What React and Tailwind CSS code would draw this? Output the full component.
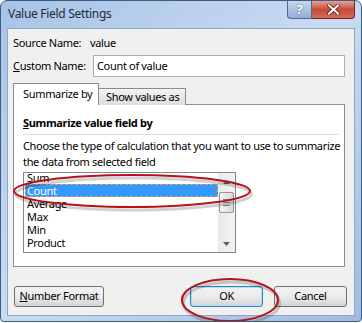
import React from "react";

const items = ["Sum", "Count", "Average", "Max", "Min", "Product"];

function Button({ children, focused, className = "" }) {
  return (
    <div
      className={`h-[21px] flex items-center justify-center rounded-[3px] border whitespace-nowrap ${
        focused ? "border-[#3c7fb1] shadow-[inset_0_0_0_1px_#a6e3fb]" : "border-[#707070]"
      } bg-gradient-to-b from-[#f2f2f2] via-[#ebebeb] to-[#d4d4d4] ${className}`}
    >
      {children}
    </div>
  );
}

export default function App() {
  return (
    <div
      className="w-[362px] h-[323px] bg-white text-[11px] tracking-[-0.33px] text-black whitespace-nowrap"
      style={{ fontFamily: '"Segoe UI", "Noto Sans", sans-serif' }}
    >
      <div className="relative w-[362px] h-[322px] rounded-t-[7px] rounded-b-[4px] border border-[#3d5c82] bg-gradient-to-br from-[#a9c3e5] via-[#c8dbf2] to-[#9fbbe2] flex flex-col overflow-hidden">
        {/* title bar */}
        <div className="h-[27px] flex items-start shrink-0">
          <div className="pl-[7px] pt-[5px] leading-[16px] text-[12px] tracking-[-0.3px] text-[#1b2a3d]">Value Field Settings</div>
          <div className="ml-auto flex mr-[6px]">
            <div className="w-[25px] h-[18px] rounded-bl-[4px] border border-t-0 border-[#4d6a91] bg-gradient-to-b from-[#c8d8ee] to-[#93aed3] flex items-center justify-center text-white font-bold text-[13px] leading-none [text-shadow:0_0_2px_#34506f]">
              ?
            </div>
            <div className="w-[43px] h-[18px] rounded-br-[4px] border border-t-0 border-l-0 border-[#6b2a24] bg-gradient-to-b from-[#e0a195] via-[#c94a37] to-[#d46b55] flex items-center justify-center">
              <svg width="13" height="11" viewBox="0 0 13 11">
                <path d="M2 1.5 L11 9.5 M11 1.5 L2 9.5" stroke="#5a1d17" strokeWidth="3.6" strokeLinecap="square" />
                <path d="M2 1.5 L11 9.5 M11 1.5 L2 9.5" stroke="#ffffff" strokeWidth="2" strokeLinecap="square" />
              </svg>
            </div>
          </div>
        </div>

        {/* client area */}
        <div className="mx-[6px] h-[288px] border border-[#8fa7c6] bg-[#f0f0f0] pl-[5px] pt-[4px]">
          <div className="h-[20px] flex items-center">
            <span className="w-[77px] shrink-0">Source Name:</span>
            <span>value</span>
          </div>
          <div className="mt-[2px] h-[22px] flex items-center">
            <span className="w-[80px] shrink-0">
              <span className="underline">C</span>ustom Name:
            </span>
            <div className="w-[252px] h-[22px] border border-[#abadb3] bg-white flex items-center pl-[3px]">
              Count of value
            </div>
          </div>

          {/* tabs */}
          <div className="mt-[6px] flex items-end h-[22px]">
            <div className="relative z-10 w-[86px] h-[22px] border border-b-0 border-[#898c95] bg-white flex items-center pl-[9px] pb-[1px]">
              Summarize by
            </div>
            <div className="w-[87px] h-[17px] border border-l-0 border-b-0 border-[#898c95] bg-gradient-to-b from-[#f3f3f3] to-[#dddddd] flex items-center pl-[7px]">
              Show values as
            </div>
          </div>
          <div className="-mt-px w-[332px] h-[163px] border border-[#898c95] bg-white pl-[9px] pr-[5px] pt-[10px]">
            <div className="font-bold leading-[16px]">
              <span className="underline">S</span>ummarize value field by
            </div>
            <div className="mt-[3px] h-px bg-[#d5dfe5]" />
            <div className="mt-[3px] leading-[16px]">
              Choose the type of calculation that you want to use to summarize
              <br />
              the data from selected field
            </div>
            <div className="mt-[2px] w-[213px] h-[81px] border border-[#828790] flex overflow-hidden">
              <div className="flex-1 pl-[1px] -mt-[2px]">
                {items.map((it) => (
                  <div
                    key={it}
                    className={`h-[13px] leading-[13px] pl-[2px] ${
                      it === "Count"
                        ? "bg-[#3399ff] text-white outline outline-1 outline-dashed outline-[#e3a14b] -outline-offset-1"
                        : ""
                    }`}
                  >
                    {it}
                  </div>
                ))}
              </div>
              <div className="w-[17px] bg-gradient-to-r from-[#e9e9e9] to-[#f4f4f4] flex flex-col items-center">
                <div className="h-[17px] flex items-center justify-center">
                  <svg width="7" height="4" viewBox="0 0 7 4">
                    <path d="M0 4 L3.5 0 L7 4 Z" fill="#606060" />
                  </svg>
                </div>
                <div className="mt-[2px] w-[15px] h-[21px] rounded-[2px] border border-[#959595] bg-gradient-to-r from-[#f3f3f3] to-[#d9d9d9] flex flex-col items-center justify-center gap-[2px]">
                  <div className="w-[7px] h-px bg-[#808080]" />
                  <div className="w-[7px] h-px bg-[#808080]" />
                  <div className="w-[7px] h-px bg-[#808080]" />
                </div>
                <div className="mt-auto h-[17px] flex items-center justify-center">
                  <svg width="7" height="4" viewBox="0 0 7 4">
                    <path d="M0 0 L7 0 L3.5 4 Z" fill="#606060" />
                  </svg>
                </div>
              </div>
            </div>
          </div>

          {/* bottom buttons */}
          <div className="mt-[19px] flex items-center pr-[7px]">
            <Button className="w-[90px] ml-px">
              <span className="underline">N</span>umber Format
            </Button>
            <Button focused className="w-[73px] ml-auto">
              OK
            </Button>
            <Button className="w-[73px] ml-[11px]">Cancel</Button>
          </div>
        </div>

        {/* annotation ellipses */}
        <svg className="absolute left-0 top-0 pointer-events-none" width="362" height="323" viewBox="0 0 362 323">
          <ellipse cx="131" cy="191" rx="118" ry="16" fill="none" stroke="#000" strokeOpacity="0.18" strokeWidth="3" transform="translate(1.5 2)" />
          <ellipse cx="131" cy="190" rx="118" ry="16" fill="none" stroke="#b5121b" strokeWidth="2" />
          <ellipse cx="229" cy="300" rx="48" ry="21" fill="none" stroke="#000" strokeOpacity="0.18" strokeWidth="3" transform="translate(1.5 2)" />
          <ellipse cx="229" cy="299" rx="48" ry="21" fill="none" stroke="#b5121b" strokeWidth="2" />
        </svg>
      </div>
    </div>
  );
}
